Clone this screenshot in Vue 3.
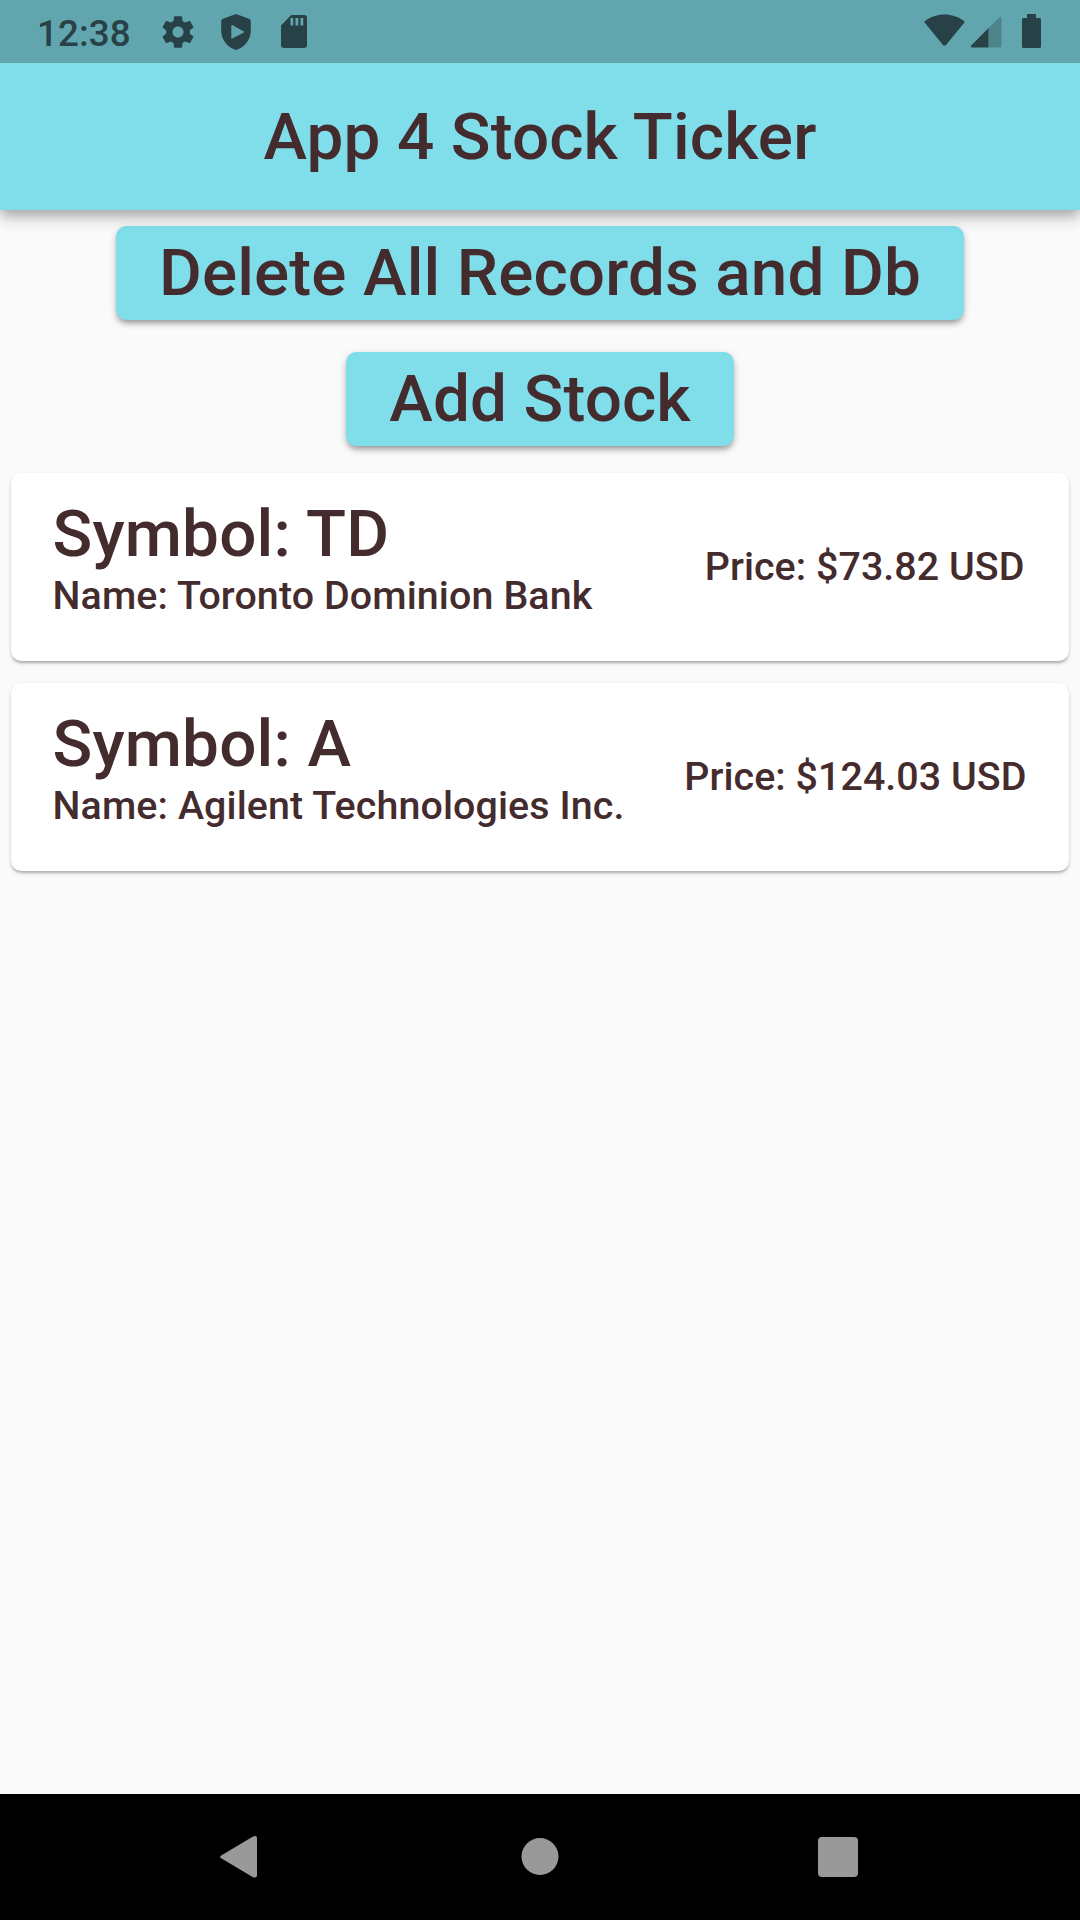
<script setup>
const stocks = [
  { symbol: 'TD', name: 'Toronto Dominion Bank', price: '$73.82 USD' },
  { symbol: 'A', name: 'Agilent Technologies Inc.', price: '$124.03 USD' },
]
</script>

<template>
  <div class="screen">
    <div class="status">
      <span class="clock">12:38</span>
      <svg class="gear" width="38" height="38" viewBox="0 0 24 24">
        <path d="M19.43 12.98c.04-.32.07-.64.07-.98s-.03-.66-.07-.98l2.11-1.65c.19-.15.24-.42.12-.64l-2-3.46c-.12-.22-.39-.3-.61-.22l-2.49 1c-.52-.4-1.08-.73-1.69-.98l-.38-2.65C14.46 2.18 14.25 2 14 2h-4c-.25 0-.46.18-.49.42l-.38 2.65c-.61.25-1.17.59-1.69.98l-2.49-1c-.23-.09-.49 0-.61.22l-2 3.46c-.13.22-.07.49.12.64l2.11 1.65c-.04.32-.07.65-.07.98s.03.66.07.98l-2.11 1.65c-.19.15-.24.42-.12.64l2 3.46c.12.22.39.3.61.22l2.49-1c.52.4 1.08.73 1.69.98l.38 2.65c.03.24.24.42.49.42h4c.25 0 .46-.18.49-.42l.38-2.65c.61-.25 1.17-.59 1.69-.98l2.49 1c.23.09.49 0 .61-.22l2-3.46c.12-.22.07-.49-.12-.64l-2.11-1.65zM12 15.5c-1.93 0-3.5-1.57-3.5-3.5s1.57-3.5 3.5-3.5 3.5 1.57 3.5 3.5-1.57 3.5-3.5 3.5z" />
      </svg>
      <svg class="shield" width="30" height="36" viewBox="0 0 30 36">
        <path fill-rule="evenodd" d="M15 0L28.6 5.1Q29.8 5.6 29.8 7V17C29.8 25.5 23.5 33.5 15 36C6.500 33.500 .2 25.500 .2 17V7Q.2 5.600 1.400 5.100ZM10.300 11.600V24.100Q10.400 25.100 11.300 24.600L22.800 18.600Q23.600 18 22.800 17.400L11.300 11.100Q10.400 10.700 10.300 11.600Z" />
      </svg>
      <svg class="sd" width="28" height="34" viewBox="0 0 28 34">
        <path fill-rule="evenodd" d="M11.200 0H24Q27 0 27 3V30Q27 33 24 33H4Q1 33 1 30V10.400ZM10.500 3V10.500H13.300V3ZM15.500 3V10.500H18.300V3ZM20.500 3V10.500H23.300V3Z" />
      </svg>
      <div class="system">
        <svg width="42" height="33" viewBox="0 0 42 33">
          <path d="M.8 8.800Q0 7.800 1 7C12-1.800 29-1.800 40 7Q41 7.800 40.200 8.800L22 31Q20.500 32.200 19 31Z" />
        </svg>
        <svg class="signal" width="32" height="32" viewBox="-.5 0 32 32">
          <path opacity=".35" d="M18 12L29.500 1Q31 0 31 2V30Q31 31.500 29.500 31.500H18Z" />
          <path d="M18 12V31.500H1.500Q-.3 31 .8 29.500Z" />
        </svg>
        <svg class="battery" width="20" height="35" viewBox=".5 0 20 35">
          <path d="M5.500 0H14.500V4H18Q19.500 4 19.500 5.500V32.500Q19.500 34 18 34H2Q.5 34 .5 32.500V5.500Q.5 4 2 4H5.500Z" />
        </svg>
      </div>
    </div>

    <header class="appbar">App 4 Stock Ticker</header>

    <main class="body">
      <div class="action"><button class="btn">Delete All Records and Db</button></div>
      <div class="action"><button class="btn">Add Stock</button></div>
      <section v-for="s in stocks" :key="s.symbol" class="card">
        <div class="info">
          <div class="symbol">Symbol: {{ s.symbol }}</div>
          <div class="small name">Name: {{ s.name }}</div>
        </div>
        <div class="small price">Price: {{ s.price }}</div>
      </section>
    </main>

    <nav class="nav">
      <svg class="back" width="38" height="44" viewBox="0 0 38 44">
        <path d="M1.200 20.500L33 1.400Q37 0 37 3V40.500Q37 43.500 33 42.200L1.200 23.300Q-1 21.900 1.200 20.500Z" />
      </svg>
      <svg class="home" width="38" height="38" viewBox="0 0 38 38"><circle cx="19" cy="18.500" r="18.500" /></svg>
      <svg class="recent" width="40" height="40" viewBox="0 0 40 40"><rect width="40" height="40" rx="4" /></svg>
    </nav>
  </div>
</template>

<style>
body {
  margin: 0;
}
</style>

<style scoped>
.screen {
  width: 1080px;
  height: 1920px;
  display: flex;
  flex-direction: column;
  background: #fafafa;
  color: #442b2d;
  font-family: Roboto, sans-serif;
  font-weight: 500;
  overflow: hidden;
}
svg {
  display: block;
  flex: none;
}
.status {
  height: 63px;
  flex: none;
  box-sizing: border-box;
  display: flex;
  align-items: flex-start;
  padding: 0 38px 0 37px;
  background: #61a6af;
  color: #284146;
  fill: #284146;
  position: relative;
  z-index: 2;
}
.clock {
  width: 122px;
  padding-top: 12px;
  font-size: 36.75px;
  line-height: 43px;
  letter-spacing: 0.1px;
}
.gear {
  margin-top: 13px;
}
.shield {
  margin: 13.500px 0 0 24px;
}
.sd {
  margin: 15px 0 0 29px;
}
.system {
  margin-left: auto;
  display: flex;
  padding-top: 14px;
}
.signal {
  margin: 1.500px 0 0 4px;
}
.battery {
  margin-left: 20px;
}
.appbar {
  height: 147px;
  flex: none;
  display: flex;
  align-items: center;
  justify-content: center;
  background: #80deea;
  font-size: 65.625px;
  letter-spacing: 0.12px;
  position: relative;
  z-index: 1;
  box-shadow: 0 5px 10px -2px rgba(0, 0, 0, 0.2), 0 10px 13px rgba(0, 0, 0, 0.14), 0 2px 20px rgba(0, 0, 0, 0.08);
}
.body {
  flex: 1;
}
.action {
  height: 126px;
  display: flex;
  align-items: center;
  justify-content: center;
}
.btn {
  height: 94.500px;
  box-sizing: border-box;
  padding: 0 43px 2px;
  border: 0;
  border-radius: 10.500px;
  background: #80deea;
  color: inherit;
  font: inherit;
  font-size: 65.625px;
  line-height: 77px;
  letter-spacing: 0.13px;
  white-space: nowrap;
  box-shadow: 0 5px 5px -3px rgba(0, 0, 0, 0.2), 0 4px 6px rgba(0, 0, 0, 0.18), 0 2px 10px rgba(0, 0, 0, 0.1);
}
.card {
  height: 188px;
  box-sizing: border-box;
  margin: 11px 11px 22px;
  padding: 0 41.500px;
  display: flex;
  align-items: center;
  justify-content: space-between;
  border-radius: 10.500px;
  background: #fff;
  box-shadow: 0 3px 3px -1px rgba(0, 0, 0, 0.2), 0 2px 3px rgba(0, 0, 0, 0.1), 0 2px 6px rgba(0, 0, 0, 0.06);
}
.info {
  align-self: flex-start;
  padding-top: 21.500px;
}
.symbol {
  font-size: 65.625px;
  line-height: 77px;
  letter-spacing: 0.2px;
}
.small {
  font-size: 39.375px;
  line-height: 46px;
}
.name {
  margin-top: 1px;
  letter-spacing: 0.12px;
}
.price {
  margin-right: 1px;
  letter-spacing: 0.06px;
}
.card:first-of-type .price {
  margin-right: 3px;
}
.nav {
  height: 126px;
  flex: none;
  display: flex;
  align-items: center;
  background: #000;
  fill: #999;
}
.back {
  margin-left: 220px;
}
.home {
  margin-left: 262.500px;
}
.recent {
  margin-left: 259.500px;
}
</style>
